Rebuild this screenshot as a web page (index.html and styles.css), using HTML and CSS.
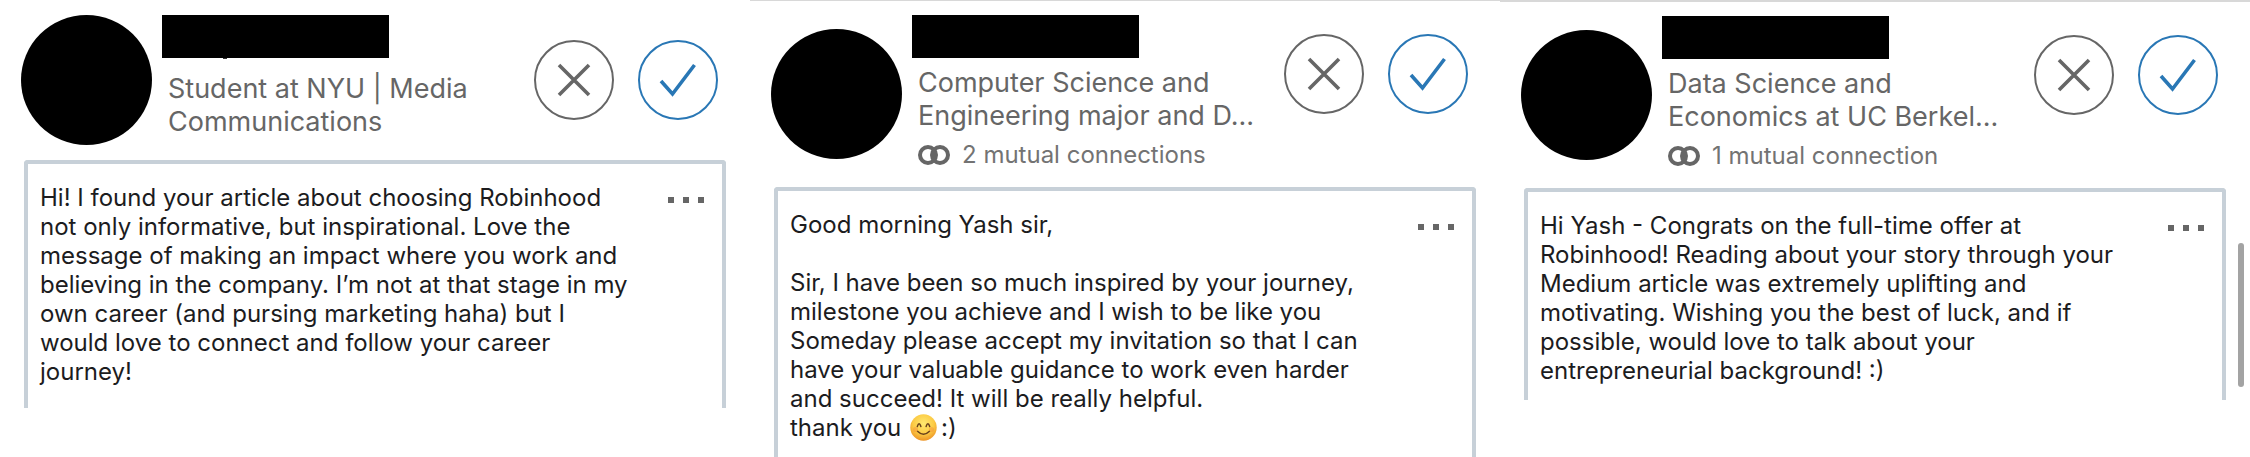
FILE: index.html
```html
<!DOCTYPE html>
<html lang="en">
<head>
<meta charset="utf-8">
<title>Invitations</title>
<link rel="stylesheet" href="styles.css">
</head>
<body>
<svg class="sprite" aria-hidden="true">
  <symbol id="icon-x" viewBox="0 0 80 80"><path d="M25 25L55 55M55 25L25 55" fill="none" stroke="currentColor" stroke-width="3.6"/></symbol>
  <symbol id="icon-check" viewBox="0 0 80 80"><path d="M23 41L34.500 54L56.500 25" fill="none" stroke="currentColor" stroke-width="3.6"/></symbol>
  <symbol id="icon-mutual" viewBox="0 0 32 20"><g fill="none" stroke="currentColor" stroke-width="4"><circle cx="10" cy="10" r="8"/><circle cx="22" cy="10" r="8"/></g><path d="M16 3.500a9 9 0 0 1 0 13a9 9 0 0 1 0-13z" fill="currentColor"/></symbol>
  <symbol id="icon-more" viewBox="0 0 38 8"><path d="M0 1h6v6H0zM15 1h6v6h-6zM30 1h6v6h-6z" fill="currentColor"/></symbol>
</svg>
<main class="invitations">
  <article class="panel panel-short">
    <header class="profile">
      <div class="avatar"></div>
      <div class="details">
        <div class="name name-cut"></div>
        <p class="headline">Student at NYU | Media<br>Communications</p>
      </div>
      <div class="actions">
        <button class="action" aria-label="Ignore"><svg><use href="#icon-x"/></svg></button>
        <button class="action accept" aria-label="Accept"><svg><use href="#icon-check"/></svg></button>
      </div>
    </header>
    <section class="message">
      <p class="text">Hi! I found your article about choosing Robinhood<br>not only informative, but inspirational. Love the<br>message of making an impact where you work and<br>believing in the company. I’m not at that stage in my<br>own career (and pursing marketing haha) but I<br>would love to connect and follow your career<br>journey!</p>
      <button class="more" aria-label="More"><svg><use href="#icon-more"/></svg></button>
    </section>
  </article>
  <article class="panel panel-line">
    <header class="profile">
      <div class="avatar"></div>
      <div class="details">
        <div class="name"></div>
        <p class="headline">Computer Science and<br>Engineering major and D...</p>
        <p class="mutual"><svg aria-hidden="true"><use href="#icon-mutual"/></svg>2 mutual connections</p>
      </div>
      <div class="actions">
        <button class="action" aria-label="Ignore"><svg><use href="#icon-x"/></svg></button>
        <button class="action accept" aria-label="Accept"><svg><use href="#icon-check"/></svg></button>
      </div>
    </header>
    <section class="message message-fill">
      <p class="text">Good morning Yash sir,<br><br>Sir, I have been so much inspired by your journey,<br>milestone you achieve and I wish to be like you<br>Someday please accept my invitation so that I can<br>have your valuable guidance to work even harder<br>and succeed! It will be really helpful.<br>thank you <svg class="emoji" viewBox="0 0 27 27" role="img" aria-label="smiling face"><defs><radialGradient id="face" cx=".5" cy=".35" r=".65"><stop offset="0" stop-color="#ffe970"/><stop offset=".6" stop-color="#fccb45"/><stop offset="1" stop-color="#ed9526"/></radialGradient></defs><circle cx="13.500" cy="13.500" r="13.200" fill="url(#face)"/><g fill="none" stroke="#68401b" stroke-width="1.500" stroke-linecap="round"><path d="M7.300 12.500q1.800-5.600 3.600 0M16.100 12.500q1.800-5.600 3.600 0M7.500 17.200q6 6 12 0"/></g><g fill="#f5883a" opacity=".4"><circle cx="5.500" cy="15.500" r="2.500"/><circle cx="21.500" cy="15.500" r="2.500"/></g></svg>:)</p>
      <button class="more" aria-label="More"><svg><use href="#icon-more"/></svg></button>
    </section>
  </article>
  <article class="panel panel-line panel-last">
    <header class="profile">
      <div class="avatar"></div>
      <div class="details">
        <div class="name"></div>
        <p class="headline">Data Science and<br>Economics at UC Berkel...</p>
        <p class="mutual"><svg aria-hidden="true"><use href="#icon-mutual"/></svg>1 mutual connection</p>
      </div>
      <div class="actions">
        <button class="action" aria-label="Ignore"><svg><use href="#icon-x"/></svg></button>
        <button class="action accept" aria-label="Accept"><svg><use href="#icon-check"/></svg></button>
      </div>
    </header>
    <section class="message">
      <p class="text">Hi Yash - Congrats on the full-time offer at<br>Robinhood! Reading about your story through your<br>Medium article was extremely uplifting and<br>motivating. Wishing you the best of luck, and if<br>possible, would love to talk about your<br>entrepreneurial background! :)</p>
      <button class="more" aria-label="More"><svg><use href="#icon-more"/></svg></button>
    </section>
    <div class="scroll-thumb"></div>
  </article>
</main>
</body>
</html>
```
FILE: styles.css
```css
* { box-sizing: border-box; }
body {
  margin: 0;
  background: #fff;
  font-family: Inter, "Liberation Sans", sans-serif;
  color: #1c1c1e;
}
p { margin: 0; }
button { padding: 0; background: none; border: 0; color: #666; cursor: pointer; }
.sprite { position: absolute; width: 0; height: 0; }
.invitations {
  display: grid;
  grid-template-columns: repeat(3, 1fr);
  min-height: 100vh;
}
.panel { position: relative; display: flex; flex-direction: column; }
.panel-line { border-top: 1px solid #d8d8d8; }
.panel-last { border-top-width: 2px; }
.profile {
  display: flex;
  align-items: flex-start;
  padding: 14px 32px 17px 21px;
}
.panel-short .profile { padding-top: 15px; padding-bottom: 15px; }
.avatar {
  flex: none;
  width: 131px;
  height: 130px;
  margin-top: 14px;
  border-radius: 50%;
  background: #000;
}
.panel-short .avatar { margin-top: 0; }
.details { flex: 1; margin-left: 10px; white-space: nowrap; }
.name { position: relative; width: 227px; height: 43px; background: #000; }
.name-cut::after {
  content: "";
  position: absolute;
  left: 61px;
  top: 43px;
  width: 4px;
  height: 1px;
  background: #333;
}
.headline {
  padding: 8px 0 0 6px;
  font-size: 27px;
  line-height: 33px;
  color: #666;
}
.panel-short .headline { padding-top: 14px; }
.mutual {
  display: flex;
  align-items: center;
  gap: 12px;
  padding: 8px 0 0 6px;
  font-size: 24px;
  line-height: 30px;
  color: #737373;
}
.mutual svg { width: 32px; height: 20px; color: #666; }
.actions { display: flex; gap: 24px; margin-top: 19px; }
.panel-short .actions { margin-top: 25px; }
.action { width: 80px; height: 80px; border: 2px solid #666; border-radius: 50%; }
.action svg { display: block; width: 80px; height: 80px; margin: -2px; }
.accept { color: #2977b5; border-color: #2977b5; }
.message {
  display: flex;
  justify-content: space-between;
  align-items: flex-start;
  margin: 0 24px;
  padding: 19px 16px 15px 12px;
  border: 4px solid #c7d0d8;
  border-bottom: 0;
  border-radius: 4px 4px 0 0;
}
.panel-short .message { padding-bottom: 22px; }
.message-fill { flex: 1; padding-bottom: 0; }
.text { font-size: 24px; line-height: 29px; white-space: nowrap; }
.emoji { width: 27px; height: 27px; margin: -6px 4px 0 2px; vertical-align: -5px; }
.more { height: 8px; margin-top: 13px; }
.more svg { display: block; width: 38px; height: 8px; }
.scroll-thumb {
  position: absolute;
  right: 6px;
  top: 241px;
  width: 6px;
  height: 144px;
  border-radius: 3px;
  background: #a3a3a3;
}
```
